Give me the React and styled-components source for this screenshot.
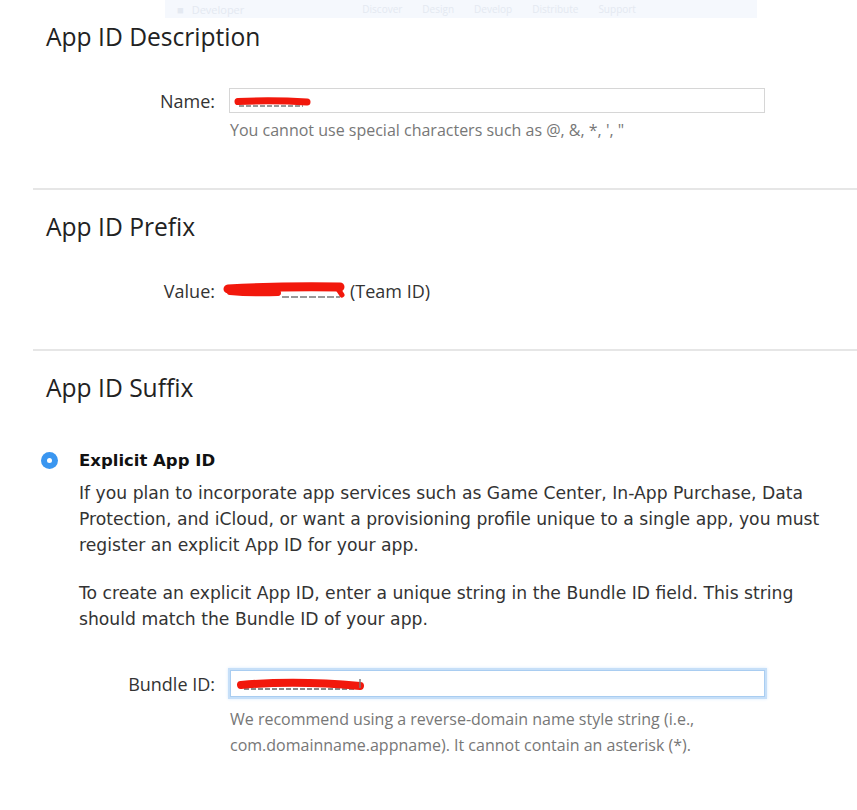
import React from "react";
import styled, { createGlobalStyle } from "styled-components";

const Global = createGlobalStyle`
  html, body { margin: 0; padding: 0; background: #fff; }
  body { font-family: "Open Sans", "DejaVu Sans", sans-serif; color: #333; }
`;

const Page = styled.div`
  width: 857px;
  overflow: hidden;
`;

const GhostNav = styled.div`
  margin-left: 165px;
  width: 592px;
  height: 18px;
  background: #f5f8fd;
  display: flex;
  align-items: center;
  gap: 8px;
  padding-left: 12px;
  box-sizing: border-box;
  font-family: "Open Sans", sans-serif;
  font-size: 11px;
  color: #e4e9f1;
`;

const GhostLink = styled.span`
  margin-left: ${(p) => p.$ml || 0}px;
  font-size: 10px;
`;

const Heading = styled.h2`
  margin: ${(p) => p.$mt}px 0 0 46px;
  font-family: "Open Sans", sans-serif;
  font-weight: 400;
  font-size: 24.6px;
  line-height: 30px;
  color: #222;
`;

const Divider = styled.hr`
  margin: ${(p) => p.$mt}px 0 0 33px;
  border: none;
  height: 2px;
  background: #e6e6e6;
`;

const FieldRow = styled.div`
  display: grid;
  grid-template-columns: ${(p) => p.$label}px 1fr;
  align-items: center;
  margin-top: ${(p) => p.$mt}px;
`;

const Label = styled.label`
  text-align: right;
  padding-right: ${(p) => p.$pr ?? 14}px;
  font-family: "Open Sans", sans-serif;
  font-size: 18px;
  color: #333;
  line-height: 24px;
`;

const Input = styled.div`
  position: relative;
  width: ${(p) => p.$w}px;
  height: ${(p) => p.$h}px;
  margin-left: ${(p) => p.$ml || 0}px;
  box-sizing: border-box;
  border: 1px solid ${(p) => (p.$focus ? "#a9cdf1" : "#d6d6d6")};
  box-shadow: ${(p) => (p.$focus ? "0 0 0 2px #c6dff8, 0 0 3px 2px #d8e9fb" : "none")};
  background: #fff;
`;

const Scribble = styled.svg`
  position: absolute;
  left: ${(p) => p.$x}px;
  top: ${(p) => p.$y}px;
`;

const Hint = styled.div`
  margin: ${(p) => p.$mt}px 0 0 230px;
  font-family: "Open Sans", sans-serif;
  font-size: 16px;
  line-height: ${(p) => p.$lh}px;
  color: #777;
`;

const ValueText = styled.div`
  display: flex;
  align-items: center;
  font-family: "Open Sans", sans-serif;
  font-size: 18px;
  line-height: 24px;
  color: #333;
`;

const Redacted = styled.span`
  display: inline-block;
  position: relative;
  width: ${(p) => p.$w}px;
  height: 24px;
  margin: 0 ${(p) => p.$mr}px 0 ${(p) => p.$ml}px;
`;

const RadioRow = styled.div`
  display: flex;
  align-items: center;
  margin: 44px 0 0 41px;
  height: 26px;
`;

const Radio = styled.span`
  width: 17px;
  height: 17px;
  border-radius: 50%;
  background: #3a96f0;
  display: flex;
  align-items: center;
  justify-content: center;
  margin-right: 21px;
  &::after {
    content: "";
    width: 5px;
    height: 5px;
    border-radius: 50%;
    background: #fff;
  }
`;

const OptionTitle = styled.span`
  font-family: "DejaVu Sans", sans-serif;
  font-weight: 700;
  font-size: 16.5px;
  color: #111;
`;

const Para = styled.p`
  margin: ${(p) => p.$mt}px 0 0 79px;
  font-family: "DejaVu Sans", sans-serif;
  font-size: 17.2px;
  line-height: 26px;
  color: #333;
  white-space: nowrap;
`;

export default function App() {
  return (
    <Page>
      <Global />
      <GhostNav>
        <span>■</span>
        <span>Developer</span>
        <GhostLink $ml={110}>Discover</GhostLink>
        <GhostLink $ml={12}>Design</GhostLink>
        <GhostLink $ml={12}>Develop</GhostLink>
        <GhostLink $ml={12}>Distribute</GhostLink>
        <GhostLink $ml={12}>Support</GhostLink>
      </GhostNav>

      <Heading $mt={4}>App ID Description</Heading>
      <FieldRow $label={229} $mt={36}>
        <Label>Name:</Label>
        <Input $w={536} $h={25}>
          <Scribble $x={3} $y={5} width="80" height="16">
            <path d="M6 12 L70 12" stroke="#999" strokeWidth="2" strokeDasharray="5 2" fill="none" />
            <path d="M5 7.5 Q40 6 74 8" stroke="#f2180c" strokeWidth="7" strokeLinecap="round" fill="none" />
          </Scribble>
        </Input>
      </FieldRow>
      <Hint $mt={7} $lh={20}>You cannot use special characters such as @, &amp;, *, ', "</Hint>

      <Divider $mt={48} />

      <Heading $mt={22}>App ID Prefix</Heading>
      <FieldRow $label={222} $mt={37}>
        <Label $pr={7}>Value:</Label>
        <ValueText>
          <Redacted $w={124} $ml={0} $mr={4}>
            <Scribble $x={0} $y={2} width="124" height="20">
              <path d="M60 16 L118 16" stroke="#999" strokeWidth="2" strokeDasharray="7 2" fill="none" />
              <path d="M6 8 Q60 5 118 6" stroke="#f2180c" strokeWidth="9" strokeLinecap="round" fill="none" />
              <path d="M8 11 Q30 13 56 12" stroke="#f2180c" strokeWidth="6" strokeLinecap="round" fill="none" />
              <path d="M116 8 L120 14" stroke="#f2180c" strokeWidth="5" strokeLinecap="round" fill="none" />
            </Scribble>
          </Redacted>
          (Team ID)
        </ValueText>
      </FieldRow>

      <Divider $mt={46} />

      <Heading $mt={22}>App ID Suffix</Heading>

      <RadioRow>
        <Radio />
        <OptionTitle>Explicit App ID</OptionTitle>
      </RadioRow>
      <Para $mt={7}>
        If you plan to incorporate app services such as Game Center, In-App Purchase, Data
        <br />
        Protection, and iCloud, or want a provisioning profile unique to a single app, you must
        <br />
        register an explicit App ID for your app.
      </Para>
      <Para $mt={22}>
        To create an explicit App ID, enter a unique string in the Bundle ID field. This string
        <br />
        should match the Bundle ID of your app.
      </Para>

      <FieldRow $label={229} $mt={38}>
        <Label>Bundle ID:</Label>
        <Input $w={535} $h={27} $ml={1} $focus>
          <Scribble $x={5} $y={5} width="130" height="18">
            <path d="M8 13 L120 13" stroke="#888" strokeWidth="2" strokeDasharray="5 2" fill="none" />
            <path d="M5 9 Q60 4 124 10" stroke="#f2180c" strokeWidth="8" strokeLinecap="round" fill="none" />
            <path d="M124 3 L124 12" stroke="#777" strokeWidth="1.5" fill="none" />
          </Scribble>
        </Input>
      </FieldRow>
      <Hint $mt={9} $lh={26}>
        We recommend using a reverse-domain name style string (i.e.,
        <br />
        com.domainname.appname). It cannot contain an asterisk (*).
      </Hint>
    </Page>
  );
}
